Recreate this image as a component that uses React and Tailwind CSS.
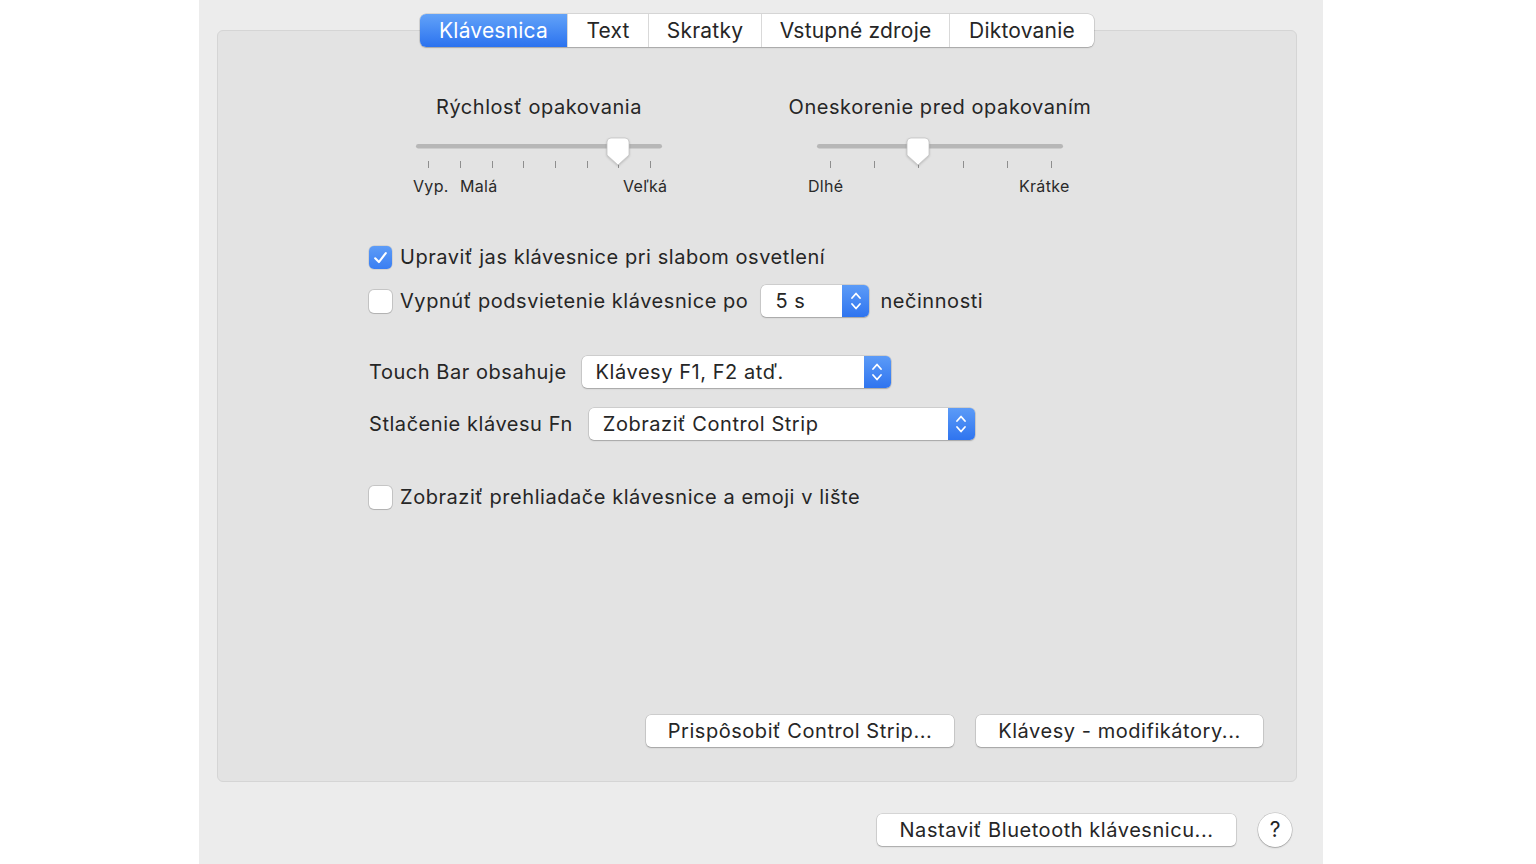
import React from "react";

const FONT = { fontFamily: "Inter, 'Noto Sans', 'Liberation Sans', sans-serif" };

function Slider({ ticks, thumb, labels }) {
  return (
    <div className="relative w-[260px] h-[64px]">
      <svg width="260" height="36" viewBox="0 0 260 36" className="block">
        <rect x="7" y="8" width="246" height="4.5" rx="2.25" fill="#b7b7b7" />
        {ticks.map((t) => (
          <line key={t} x1={t + 0.5} y1="25" x2={t + 0.5} y2="32" stroke="#8e8e8e" strokeWidth="1" />
        ))}
        <g>
          <path
            d={`M ${thumb - 11} 6 Q ${thumb - 11} 2 ${thumb - 7} 2 L ${thumb + 7} 2 Q ${thumb + 11} 2 ${thumb + 11} 6 L ${thumb + 11} 19 L ${thumb} 29 L ${thumb - 11} 19 Z`}
            fill="#ffffff"
            stroke="#c4c4c4"
            strokeWidth="0.8"
            style={{ filter: "drop-shadow(0 1px 1px rgba(0,0,0,0.18))" }}
          />
        </g>
      </svg>
      {labels.map((l) => (
        <span
          key={l.t}
          className="absolute top-[41px] text-[16px] leading-[18px] tracking-[0.3px] text-[#2a2a2a] whitespace-nowrap"
          style={{ left: l.x }}
        >
          {l.t}
        </span>
      ))}
    </div>
  );
}

function Checkbox({ checked }) {
  if (checked) {
    return (
      <div className="w-[23px] h-[23px] rounded-[5px] bg-gradient-to-b from-[#5d9cf7] to-[#3a7ef2] flex items-center justify-center shadow-[0_0_0_0.5px_rgba(0,0,0,0.15)] shrink-0">
        <svg width="17" height="17" viewBox="0 0 16 16">
          <path d="M3 8.8 L6.5 12.3 L13 3.8" fill="none" stroke="white" strokeWidth="2" strokeLinecap="round" strokeLinejoin="round" />
        </svg>
      </div>
    );
  }
  return (
    <div className="w-[23px] h-[23px] rounded-[5px] bg-white shadow-[0_0_0_1px_rgba(0,0,0,0.13),0_1px_1px_rgba(0,0,0,0.1)] shrink-0" />
  );
}

function Stepper() {
  return (
    <div className="w-[27px] self-stretch rounded-r-[5px] bg-gradient-to-b from-[#5c9bf7] to-[#2f74ef] flex items-center justify-center">
      <svg width="14" height="24" viewBox="0 0 14 24">
        <path d="M3 9 L7 4.5 L11 9" fill="none" stroke="white" strokeWidth="1.8" strokeLinecap="round" strokeLinejoin="round" />
        <path d="M3 15 L7 19.5 L11 15" fill="none" stroke="white" strokeWidth="1.8" strokeLinecap="round" strokeLinejoin="round" />
      </svg>
    </div>
  );
}

function Popup({ width, text }) {
  return (
    <div
      className="h-[32px] flex items-stretch bg-white rounded-[5px] shadow-[0_0_0_0.5px_rgba(0,0,0,0.18),0_1px_1.5px_rgba(0,0,0,0.2)]"
      style={{ width }}
    >
      <div className="flex-1 flex items-center pl-[14px] text-[20px] tracking-[0.55px] text-[#262626]">{text}</div>
      <Stepper />
    </div>
  );
}

function Button({ width, children }) {
  return (
    <div
      className="h-[32px] flex items-center justify-center bg-white rounded-[5px] text-[20px] tracking-[0.55px] text-[#262626] shadow-[0_0_0_0.5px_rgba(0,0,0,0.18),0_1px_1.5px_rgba(0,0,0,0.22)]"
      style={{ width }}
    >
      {children}
    </div>
  );
}

export default function App() {
  const tabs = ["Klávesnica", "Text", "Skratky", "Vstupné zdroje", "Diktovanie"];
  const tabW = [147, 81, 113, 188, 145];
  return (
    <div className="w-full h-[864px] bg-white overflow-hidden" style={FONT}>
      <div className="ml-[199px] w-[1124px] h-[864px] bg-[#ececec] flex flex-col">
        <div className="mt-[30px] ml-[18px] w-[1080px] h-[752px] bg-[#e3e3e3] border border-[#d5d5d5] rounded-[6px] flex flex-col">
          {/* Tabs */}
          <div className="-mt-[17px] flex justify-center">
            <div className="flex h-[33px] rounded-[6px] bg-white shadow-[0_0_0_0.5px_rgba(0,0,0,0.18),0_1px_1.5px_rgba(0,0,0,0.2)]">
              {tabs.map((t, i) => (
                <div
                  key={t}
                  className={
                    i === 0
                      ? "flex items-center justify-center rounded-l-[6px] bg-gradient-to-b from-[#62a2f8] to-[#2b72ef] text-white text-[21px] tracking-[0.2px]"
                      : "flex items-center justify-center text-[#262626] text-[21px] tracking-[0.2px] border-l border-[#d9d9d9]"
                  }
                  style={{ width: tabW[i] }}
                >
                  {t}
                </div>
              ))}
            </div>
          </div>

          {/* Sliders */}
          <div className="mt-[48px] flex pl-[191px] gap-[141px]">
            <div className="flex flex-col items-center w-[260px]">
              <div className="text-[20px] leading-[24px] tracking-[0.55px] text-[#262626] whitespace-nowrap">Rýchlosť opakovania</div>
              <div className="mt-[17px]">
                <Slider
                  ticks={[19, 51, 83, 114, 146, 178, 209, 241]}
                  thumb={209}
                  labels={[
                    { t: "Vyp.", x: 4 },
                    { t: "Malá", x: 51 },
                    { t: "Veľká", x: 214 },
                  ]}
                />
              </div>
            </div>
            <div className="flex flex-col items-center w-[260px]">
              <div className="text-[20px] leading-[24px] tracking-[0.55px] text-[#262626] whitespace-nowrap">Oneskorenie pred opakovaním</div>
              <div className="mt-[17px]">
                <Slider
                  ticks={[20, 64, 108, 153, 197, 241]}
                  thumb={108}
                  labels={[
                    { t: "Dlhé", x: -2 },
                    { t: "Krátke", x: 209 },
                  ]}
                />
              </div>
            </div>
          </div>

          {/* Options */}
          <div className="pl-[151px] flex flex-col text-[20px] tracking-[0.55px] text-[#262626]">
            <div className="mt-[41px] h-[32px] flex items-center gap-[8px]">
              <Checkbox checked />
              <span>Upraviť jas klávesnice pri slabom osvetlení</span>
            </div>
            <div className="mt-[12px] h-[32px] flex items-center">
              <Checkbox />
              <span className="ml-[8px]">Vypnúť podsvietenie klávesnice po</span>
              <div className="ml-[13px]">
                <Popup width={108} text="5 s" />
              </div>
              <span className="ml-[11px]">nečinnosti</span>
            </div>

            <div className="mt-[39px] h-[32px] flex items-center gap-[15px]">
              <span>Touch Bar obsahuje</span>
              <Popup width={309} text="Klávesy F1, F2 atď." />
            </div>
            <div className="mt-[20px] h-[32px] flex items-center gap-[16px]">
              <span>Stlačenie klávesu Fn</span>
              <Popup width={386} text="Zobraziť Control Strip" />
            </div>

            <div className="mt-[41px] h-[32px] flex items-center gap-[8px]">
              <Checkbox />
              <span>Zobraziť prehliadače klávesnice a emoji v lište</span>
            </div>
          </div>

          <div className="flex-1" />
          <div className="flex justify-end gap-[22px] pr-[33px] pb-[34px]">
            <Button width={308}>Prispôsobiť Control Strip...</Button>
            <Button width={287}>Klávesy - modifikátory...</Button>
          </div>
        </div>

        {/* Bottom row */}
        <div className="mt-[31px] flex justify-end items-center gap-[22px] pr-[31px]">
          <Button width={359}>Nastaviť Bluetooth klávesnicu...</Button>
          <div className="w-[34px] h-[34px] rounded-full bg-white flex items-center justify-center text-[21px] text-[#262626] shadow-[0_0_0_0.5px_rgba(0,0,0,0.2),0_1px_1.5px_rgba(0,0,0,0.22)]">
            ?
          </div>
        </div>
      </div>
    </div>
  );
}
